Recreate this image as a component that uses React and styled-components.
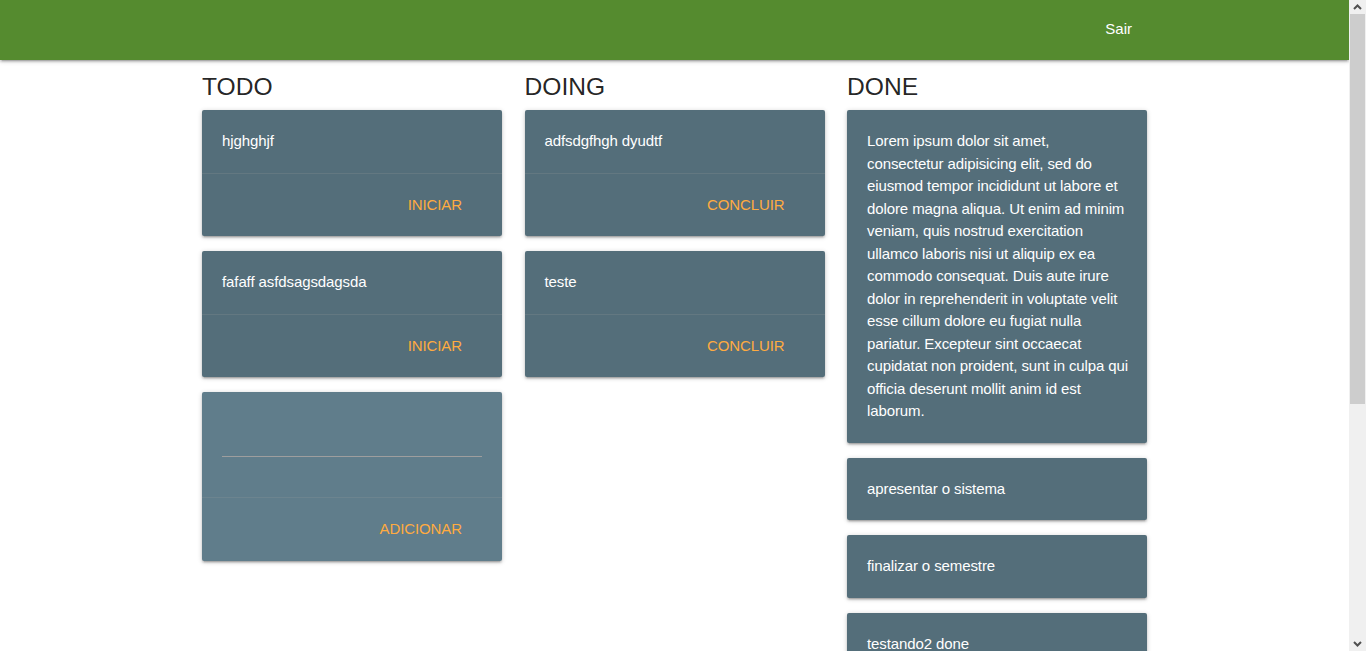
import styled, { createGlobalStyle } from "styled-components"

const GlobalStyle = createGlobalStyle`
    body{
        margin: 0;
        padding-right: 17px;
        font-family: "Liberation Sans", Arial, sans-serif;
        font-size: 15px;
        letter-spacing: -0.1px;
        line-height: 1.5;
        color: rgba(0,0,0,0.87);
        background: #fff;
    }
    *{
        box-sizing: border-box;
    }
`

const todo = ["hjghghjf", "fafaff asfdsagsdagsda"]
const doing = ["adfsdgfhgh dyudtf", "teste"]
const done = [
    "Lorem ipsum dolor sit amet, consectetur adipisicing elit, sed do eiusmod tempor incididunt ut labore et dolore magna aliqua. Ut enim ad minim veniam, quis nostrud exercitation ullamco laboris nisi ut aliquip ex ea commodo consequat. Duis aute irure dolor in reprehenderit in voluptate velit esse cillum dolore eu fugiat nulla pariatur. Excepteur sint occaecat cupidatat non proident, sunt in culpa qui officia deserunt mollit anim id est laborum.",
    "apresentar o sistema",
    "finalizar o semestre",
    "testando2 done",
]

export default function App(){
    return(
        <>
            <GlobalStyle/>
            <Nav>
                <NavInner>
                    <NavLink href="#">Sair</NavLink>
                </NavInner>
            </Nav>
            <Board>
                <Column>
                    <Title>TODO</Title>
                    {todo.map(t => (
                        <Card key={t}>
                            <CardContent>{t}</CardContent>
                            <CardAction><ActionLink href="#">Iniciar</ActionLink></CardAction>
                        </Card>
                    ))}
                    <Card $light>
                        <CardContent>
                            <Input type="text"/>
                        </CardContent>
                        <CardAction><ActionLink href="#">Adicionar</ActionLink></CardAction>
                    </Card>
                </Column>
                <Column>
                    <Title>DOING</Title>
                    {doing.map(t => (
                        <Card key={t}>
                            <CardContent>{t}</CardContent>
                            <CardAction><ActionLink href="#">Concluir</ActionLink></CardAction>
                        </Card>
                    ))}
                </Column>
                <Column>
                    <Title>DONE</Title>
                    {done.map(t => (
                        <Card key={t}>
                            <CardContent>{t}</CardContent>
                        </Card>
                    ))}
                </Column>
            </Board>
            <ScrollTrack>
                <ScrollButton>
                    <svg width="9" height="6" viewBox="0 0 9 6"><polyline points="1,5 4.5,1.5 8,5" fill="none" stroke="#505050" strokeWidth="2"/></svg>
                </ScrollButton>
                <ScrollThumb/>
                <ScrollButton>
                    <svg width="9" height="6" viewBox="0 0 9 6"><polyline points="1,1 4.5,4.5 8,1" fill="none" stroke="#505050" strokeWidth="2"/></svg>
                </ScrollButton>
            </ScrollTrack>
        </>
    )
}

const Nav = styled.nav`
    height: 60px;
    background: #558b2f;
    box-shadow: 0 2px 2px 0 rgba(0,0,0,0.14), 0 3px 1px -2px rgba(0,0,0,0.12), 0 1px 5px 0 rgba(0,0,0,0.2);
    position: relative;
    z-index: 1;
`
const NavInner = styled.div`
    width: 945px;
    margin: 0 auto;
    height: 100%;
    display: flex;
    justify-content: flex-end;
    align-items: center;
`
const NavLink = styled.a`
    color: #fff;
    text-decoration: none;
    font-size: 15px;
    letter-spacing: 0;
    padding: 0 15px;
    line-height: 56px;
    margin-bottom: 2px;
`
const Board = styled.main`
    width: 945px;
    margin: 0 auto;
    display: grid;
    grid-template-columns: repeat(3, 300px);
    column-gap: 22.5px;
    align-items: start;
`
const Column = styled.section`
    display: flex;
    flex-direction: column;
`
const Title = styled.h5`
    font-size: 24.6px;
    font-weight: 400;
    letter-spacing: 0;
    line-height: 27px;
    margin: 13px 0 10px;
    color: rgba(0,0,0,0.87);
`
const Card = styled.div`
    background: ${p => p.$light ? "#607d8b" : "#546e7a"};
    color: #fff;
    border-radius: 2px;
    margin: 0 0 15px;
    box-shadow: 0 2px 2px 0 rgba(0,0,0,0.14), 0 3px 1px -2px rgba(0,0,0,0.12), 0 1px 5px 0 rgba(0,0,0,0.2);
`
const CardContent = styled.div`
    padding: 20px 18px 20px 20px;
`
const CardAction = styled.div`
    border-top: 1px solid rgba(160,160,160,0.2);
    padding: 20px 40px 20px 20px;
    text-align: right;
`
const ActionLink = styled.a`
    color: #ffab40;
    text-decoration: none;
    text-transform: uppercase;
`
const Input = styled.input`
    display: block;
    width: calc(100% - 2px);
    height: 45px;
    margin: 0 0 20px;
    padding: 0;
    border: none;
    border-bottom: 1px solid #9e9e9e;
    background: transparent;
    color: #fff;
    font: inherit;
    outline: none;
`
const ScrollTrack = styled.aside`
    position: fixed;
    top: 0;
    right: 0;
    bottom: 0;
    width: 17px;
    background: #f0f0f0;
    display: flex;
    flex-direction: column;
    z-index: 2;
`
const ScrollButton = styled.div`
    height: 14px;
    display: flex;
    align-items: center;
    justify-content: center;
`
const ScrollThumb = styled.div`
    height: 390px;
    margin: 0 1px auto;
    background: #cdcdcd;
`
